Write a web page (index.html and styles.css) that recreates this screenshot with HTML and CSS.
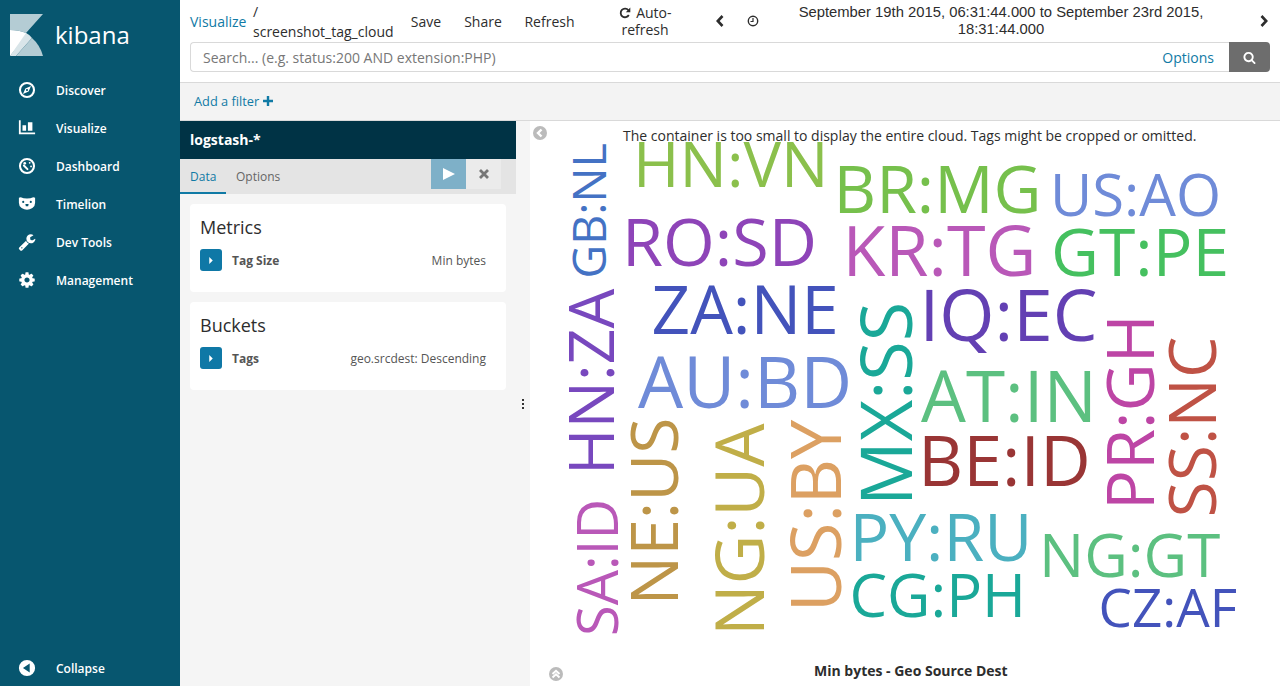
FILE: index.html
```html
<!DOCTYPE html>
<html lang="en">
<head>
  <meta charset="UTF-8">
  <title>Visualize - Kibana</title>
  <link rel="stylesheet" href="styles.css">
</head>
<body>
  <aside class="sidenav">
    <div class="brand">
      <svg class="brand-logo" viewBox="10 14 33 42" width="33" height="42">
        <path fill="#b4ccd4" d="M10 14H43L26 33Q19 30 10 30Z"/>
        <path fill="#fff" d="M10 30Q19 30 26 33L27 35L10 56Z"/>
        <path fill="#d9e5e9" d="M26 33Q29.500 34.500 32 38L16 56H10Z"/>
        <path fill="#b4ccd4" d="M32 38Q40 45 43 56H16Z"/>
      </svg>
      <span class="brand-name">kibana</span>
    </div>
    <ul class="nav-list">
      <li class="nav-item">
        <svg class="nav-icon" viewBox="0 0 20 20"><circle cx="10" cy="10" r="7.800" fill="none" stroke="#fff" stroke-width="2.300"/><path fill="#fff" d="M14.500 5.500L11.800 11.800L5.500 14.500L8.200 8.200ZM10 8.800A1.200 1.200 0 1 0 10 11.200A1.200 1.200 0 1 0 10 8.800Z" fill-rule="evenodd"/></svg>
        <span>Discover</span>
      </li>
      <li class="nav-item">
        <svg class="nav-icon" viewBox="0 0 20 20"><path fill="#fff" d="M1 1.500H3V15H19V17H1ZM5 7H9V13H5ZM11 3.500H16V13H11Z"/></svg>
        <span>Visualize</span>
      </li>
      <li class="nav-item">
        <svg class="nav-icon" viewBox="0 0 20 20"><circle cx="10" cy="10" r="7.800" fill="none" stroke="#fff" stroke-width="2.300"/><circle cx="7.500" cy="7" r="1.500" fill="#fff"/><circle cx="13" cy="6.500" r="1" fill="#fff"/><circle cx="14.500" cy="10.500" r="1" fill="#fff"/><path stroke="#fff" stroke-width="2.200" stroke-linecap="round" d="M6.500 9.500L10.500 13.500"/></svg>
        <span>Dashboard</span>
      </li>
      <li class="nav-item">
        <svg class="nav-icon" viewBox="0 0 20 20"><path fill="#fff" fill-rule="evenodd" d="M1 3L3 2.500Q6 4 10 4Q14 4 17 2.500L19 3V8.500Q19 12.500 16 14.500Q13 16.500 10 16.500Q7 16.500 4 14.500Q1 12.500 1 8.500ZM5.800 6.500A1.200 1.200 0 1 0 5.800 8.900A1.200 1.200 0 1 0 5.800 6.500ZM14.200 6.500A1.200 1.200 0 1 0 14.200 8.900A1.200 1.200 0 1 0 14.200 6.500ZM8.200 10L11.800 10L11.300 12.500H8.700Z"/></svg>
        <span>Timelion</span>
      </li>
      <li class="nav-item">
        <svg class="nav-icon" viewBox="0 0 1792 1792"><path fill="#fff" d="M448 1472q0-26-19-45t-45-19-45 19-19 45 19 45 45 19 45-19 19-45zm644-420l-682 682q-37 37-90 37-52 0-91-37l-106-108q-38-36-38-90 0-53 38-91l681-681q39 98 114.500 173.500t173.500 114.500zm634-435q0 39-23 106-47 134-164.500 217.500t-258.500 83.500q-185 0-316.500-131.500t-131.500-316.500 131.500-316.500 316.500-131.500q58 0 121.500 16.500t107.500 46.500q16 11 16 28t-16 28l-293 169v224l193 107q5-3 79-48.500t135.500-81 70.500-35.500q15 0 23.500 10t8.500 25z"/></svg>
        <span>Dev Tools</span>
      </li>
      <li class="nav-item">
        <svg class="nav-icon" viewBox="0 0 1792 1792"><path fill="#fff" d="M1152 896q0-106-75-181t-181-75-181 75-75 181 75 181 181 75 181-75 75-181zm512-109v222q0 12-8 23t-20 13l-185 28q-19 54-39 91 35 50 107 138 10 12 10 25t-9 23q-27 37-99 108t-94 71q-12 0-26-9l-138-108q-44 23-91 38-16 136-29 186-7 28-36 28h-222q-14 0-24.500-8.500t-11.500-21.500l-28-184q-49-16-90-37l-141 107q-10 9-25 9-14 0-25-11-126-114-165-168-7-10-7-23 0-12 8-23 15-21 51-66.500t54-70.500q-27-50-41-99l-183-27q-13-2-21-12.500t-8-23.500v-222q0-12 8-23t19-13l186-28q14-46 39-92-40-57-107-138-10-12-10-24 0-10 9-23 26-36 98.500-107.500t94.500-71.500q13 0 26 10l138 107q44-23 91-38 16-136 29-186 7-28 36-28h222q14 0 24.500 8.500t11.500 21.500l28 184q49 16 90 37l142-107q9-9 24-9 13 0 25 10 129 119 165 170 7 8 7 22 0 12-8 23-15 21-51 66.500t-54 70.500q26 50 41 98l183 28q13 2 21 12.500t8 23.500z"/></svg>
        <span>Management</span>
      </li>
    </ul>
    <div class="nav-item collapse-item">
      <svg class="nav-icon" viewBox="0 0 20 20"><path fill="#fff" fill-rule="evenodd" d="M10 1A9 9 0 1 0 10 19A9 9 0 1 0 10 1ZM13 5V15L5.500 10Z"/></svg>
      <span>Collapse</span>
    </div>
  </aside>

  <div class="content">
    <header class="topbar">
      <div class="menu-row">
        <a class="crumb-link">Visualize</a>
        <div class="crumb-title">/<br>screenshot_tag_cloud</div>
        <a class="menu-item save">Save</a>
        <a class="menu-item share">Share</a>
        <a class="menu-item refresh">Refresh</a>
        <a class="menu-item auto-refresh">
          <svg class="repeat-icon" viewBox="0 0 12 12" width="12" height="12"><path fill="none" stroke="#2d2d2d" stroke-width="1.800" d="M9.800 8A4.300 4.300 0 1 1 9.400 3.300"/><path fill="#2d2d2d" d="M11.300 .6V5.200H6.800Z"/></svg>
          Auto-<br>refresh
        </a>
        <svg class="chevron chevron-left" viewBox="0 0 10 14" width="10" height="14"><path fill="none" stroke="#2d2d2d" stroke-width="2.600" d="M7.500 2L2.800 7L7.500 12"/></svg>
        <svg class="clock" viewBox="0 0 12 12" width="12" height="12"><circle cx="6" cy="6" r="4.700" fill="none" stroke="#2d2d2d" stroke-width="1.400"/><path fill="none" stroke="#2d2d2d" stroke-width="1.200" d="M6 3V6.500H3.500"/></svg>
        <div class="time-range">September 19th 2015, 06:31:44.000 to September 23rd 2015, 18:31:44.000</div>
        <svg class="chevron chevron-right" viewBox="0 0 10 14" width="10" height="14"><path fill="none" stroke="#2d2d2d" stroke-width="2.600" d="M2.500 2L7.200 7L2.500 12"/></svg>
      </div>
      <form class="search-row">
        <div class="search-box">
          <span class="search-hint">Search... (e.g. status:200 AND extension:PHP)</span>
          <a class="search-options">Options</a>
        </div>
        <div class="search-btn">
          <svg viewBox="0 0 1792 1792" width="13" height="13"><path fill="#fff" d="M1216 832q0-185-131.500-316.500t-316.500-131.500-316.500 131.500-131.500 316.500 131.500 316.500 316.500 131.500 316.500-131.500 131.500-316.500zm512 832q0 52-38 90t-90 38q-54 0-90-38l-343-342q-179 124-399 124-143 0-273.500-55.500t-225-150-150-225-55.500-273.500 55.500-273.500 150-225 225-150 273.500-55.500 273.500 55.500 225 150 150 225 55.500 273.500q0 220-124 399l343 343q37 37 37 90z"/></svg>
        </div>
      </form>
    </header>

    <div class="filterbar">
      <a class="add-filter">Add a filter</a>
      <svg class="plus" viewBox="0 0 10 10" width="10" height="10"><path fill="#107aa5" d="M3.800 0H6.200V3.800H10V6.200H6.200V10H3.800V6.200H0V3.800H3.800Z"/></svg>
    </div>

    <div class="editor">
      <section class="panel">
        <div class="panel-title">logstash-*</div>
        <div class="panel-tabs">
          <a class="tab tab-active">Data</a>
          <a class="tab">Options</a>
          <div class="panel-actions">
            <div class="btn-apply"><svg viewBox="0 0 12 12" width="12" height="12"><path fill="#fff" d="M0 0L12 6L0 12Z"/></svg></div>
            <div class="btn-discard"><svg viewBox="0 0 10 10" width="10" height="10"><path stroke="#777" stroke-width="2.800" d="M1 1L9 9M9 1L1 9"/></svg></div>
          </div>
        </div>
        <div class="card">
          <div class="card-title">Metrics</div>
          <div class="agg-row">
            <div class="agg-toggle"><svg viewBox="0 0 4 8" width="4" height="7"><path fill="#fff" d="M0 0L4 4L0 8Z"/></svg></div>
            <span class="agg-name">Tag Size</span>
            <span class="agg-desc">Min bytes</span>
          </div>
        </div>
        <div class="card">
          <div class="card-title">Buckets</div>
          <div class="agg-row">
            <div class="agg-toggle"><svg viewBox="0 0 4 8" width="4" height="7"><path fill="#fff" d="M0 0L4 4L0 8Z"/></svg></div>
            <span class="agg-name">Tags</span>
            <span class="agg-desc">geo.srcdest: Descending</span>
          </div>
        </div>
      </section>

      <div class="resizer"><i></i><i></i><i></i></div>

      <section class="canvas">
        <!-- viewBox uses page coordinates so the word positions are easy to check -->
        <svg class="cloud" viewBox="530 121 750 565" width="750" height="565">
          <text class="c-lime" x="633" y="187" font-size="63">HN:VN</text>
          <text class="c-green" x="833.500" y="213" font-size="66">BR:MG</text>
          <text class="c-periwinkle" x="1050" y="216" font-size="58">US:AO</text>
          <text class="c-purple" x="622" y="266" font-size="66.500">RO:SD</text>
          <text class="c-orchid" x="842.500" y="276" font-size="70">KR:TG</text>
          <text class="c-emerald" x="1051" y="276" font-size="66">GT:PE</text>
          <text class="c-indigo" x="651.500" y="334" font-size="67.500">ZA:NE</text>
          <text class="c-violet" x="919.500" y="341" font-size="71">IQ:EC</text>
          <text class="c-periwinkle" x="638" y="408" font-size="71.500">AU:BD</text>
          <text class="c-mint" x="921" y="422" font-size="71">AT:IN</text>
          <text class="c-brick" x="918" y="486" font-size="70">BE:ID</text>
          <text class="c-sky" x="849.500" y="561" font-size="66">PY:RU</text>
          <text class="c-mint" x="1039" y="577" font-size="60">NG:GT</text>
          <text class="c-teal" x="849.500" y="617" font-size="59.700">CG:PH</text>
          <text class="c-indigo" x="1098.500" y="627" font-size="53">CZ:AF</text>
          <text class="c-blue" transform="translate(606 278.500) rotate(-90)" font-size="46.500">GB:NL</text>
          <text class="c-grape" transform="translate(614 475) rotate(-90)" font-size="63">HN:ZA</text>
          <text class="c-orchid" transform="translate(618 636) rotate(-90)" font-size="56">SA:ID</text>
          <text class="c-ochre" transform="translate(678 605.500) rotate(-90)" font-size="66">NE:US</text>
          <text class="c-olive" transform="translate(764 636) rotate(-90)" font-size="68.500">NG:UA</text>
          <text class="c-tan" transform="translate(841 612) rotate(-90)" font-size="70">US:BY</text>
          <text class="c-teal" transform="translate(912 506) rotate(-90)" font-size="72">MX:SS</text>
          <text class="c-magenta" transform="translate(1154 510) rotate(-90)" font-size="66.500">PR:GH</text>
          <text class="c-rust" transform="translate(1216 517.500) rotate(-90)" font-size="66">SS:NC</text>
        </svg>
        <svg class="spy-toggle spy-left" viewBox="0 0 14 14" width="14" height="14"><circle cx="7" cy="7" r="7" fill="#bbb"/><path fill="none" stroke="#fff" stroke-width="2.400" d="M8.500 3.500L5 7L8.500 10.500"/></svg>
        <p class="cloud-warning">The container is too small to display the entire cloud. Tags might be cropped or omitted.</p>
        <p class="cloud-label">Min bytes - Geo Source Dest</p>
        <svg class="spy-toggle spy-bottom" viewBox="0 0 14 14" width="14" height="14"><circle cx="7" cy="7" r="7" fill="#bbb"/><path fill="none" stroke="#fff" stroke-width="2" d="M3.500 7L7 3.800L10.500 7M3.500 10.500L7 7.300L10.500 10.500"/></svg>
      </section>
    </div>
  </div>
</body>
</html>
```

FILE: styles.css
```css
* {
  box-sizing: border-box;
}
html, body {
  height: 100%;
}
body {
  margin: 0;
  display: flex;
  overflow: hidden;
  font-family: "Open Sans", sans-serif;
  font-size: 14px;
  color: #2d2d2d;
  background: #fff;
}
a {
  color: inherit;
}
ul {
  list-style: none;
  margin: 0;
  padding: 0;
}

/* left nav */
.sidenav {
  flex: 0 0 180px;
  display: flex;
  flex-direction: column;
  background: #07566f;
  color: #fff;
}
.brand {
  display: flex;
  align-items: center;
  height: 71px;
  padding: 0 0 1px 10px;
}
.brand-name {
  margin-left: 12px;
  font-size: 24px;
  line-height: 42px;
}
.nav-item {
  display: flex;
  align-items: center;
  height: 38px;
  padding-left: 18px;
  font-size: 12px;
  font-weight: 600;
}
.nav-icon {
  width: 18px;
  height: 18px;
  margin-right: 20px;
}
.collapse-item {
  margin-top: auto;
  margin-bottom: -1px;
}

/* top bar */
.content {
  flex: 1;
  min-width: 0;
  display: flex;
  flex-direction: column;
}
.topbar {
  height: 83px;
  padding: 0 10px;
  border-bottom: 1px solid #d9d9d9;
}
.menu-row {
  display: flex;
  align-items: center;
  height: 42px;
}
.crumb-link {
  width: 63px;
  color: #107aa5;
}
.crumb-title {
  width: 157px;
  line-height: 20px;
  margin-top: 1px;
}
.menu-item {
  text-align: center;
}
.save {
  width: 32px;
}
.share {
  width: 38px;
  margin-left: 22px;
}
.refresh {
  width: 51px;
  margin-left: 22px;
}
.auto-refresh {
  width: 60px;
  margin-left: 40px;
  line-height: 17px;
}
.repeat-icon {
  vertical-align: -1px;
  margin-right: 2px;
}
.chevron-left {
  margin-left: 40px;
}
.clock {
  margin-left: 22px;
}
.time-range {
  width: 420px;
  margin-left: 32px;
  font-family: "Liberation Sans", sans-serif;
  font-size: 14.800px;
  line-height: 17px;
  text-align: center;
}
.chevron-right {
  margin-left: 48px;
}
.search-row {
  display: flex;
  height: 30px;
  margin: 0;
}
.search-box {
  flex: 1;
  display: flex;
  align-items: center;
  justify-content: space-between;
  padding: 0 15px 0 12px;
  border: 1px solid #d9d9d9;
  border-right: 0;
  border-radius: 4px 0 0 4px;
}
.search-hint {
  color: #777;
}
.search-options {
  color: #107aa5;
}
.search-btn {
  flex: 0 0 41px;
  display: flex;
  align-items: center;
  justify-content: center;
  background: #6d6d6d;
  border-radius: 0 4px 4px 0;
}

/* filters */
.filterbar {
  display: flex;
  align-items: center;
  gap: 4px;
  height: 38px;
  padding: 0 0 2px 14px;
  background: #f3f3f3;
  border-bottom: 1px solid #d9d9d9;
}
.add-filter {
  font-size: 12.800px;
  color: #107aa5;
}

/* editor */
.editor {
  flex: 1;
  min-height: 0;
  display: flex;
}
.panel {
  flex: 0 0 336px;
  background: #f5f5f5;
}
.panel-title {
  height: 38px;
  padding-left: 10px;
  background: #003345;
  color: #fff;
  font-weight: 700;
  line-height: 38px;
}
.panel-tabs {
  display: flex;
  height: 35px;
  margin-bottom: 10px;
  background: #e4e4e4;
}
.tab {
  padding: 0 10px;
  font-size: 12px;
  line-height: 35px;
  color: #666;
}
.tab-active {
  width: 46px;
  color: #107aa5;
  border-bottom: 2px solid #107aa5;
}
.panel-actions {
  display: flex;
  margin-left: auto;
  margin-right: 15px;
}
.btn-apply, .btn-discard {
  display: flex;
  align-items: center;
  justify-content: center;
  width: 35px;
  height: 30px;
}
.btn-apply {
  background: #7eb0c8;
}
.btn-discard {
  background: #ebebeb;
}
.card {
  height: 88px;
  margin: 0 10px 10px;
  padding: 11px 10px 10px;
  background: #fff;
  border-radius: 4px;
}
.card-title {
  font-size: 18px;
  line-height: 24px;
}
.agg-row {
  display: flex;
  align-items: center;
  margin-top: 10px;
  padding-right: 10px;
  font-size: 12px;
  color: #555;
}
.agg-toggle {
  display: flex;
  align-items: center;
  justify-content: center;
  width: 22px;
  height: 22px;
  margin-right: 10px;
  background: #0f78a6;
  border-radius: 3px;
}
.agg-name {
  font-weight: 700;
}
.agg-desc {
  margin-left: auto;
}
.resizer {
  flex: 0 0 14px;
  display: flex;
  flex-direction: column;
  align-items: center;
  gap: 2px;
  padding-top: 278px;
  background: #f5f5f5;
}
.resizer i {
  width: 2px;
  height: 2px;
  background: #333;
}

/* tag cloud, free canvas */
.canvas {
  position: relative;
  flex: 1;
  overflow: hidden;
}
.cloud {
  position: absolute;
  left: 0;
  top: 0;
}
.cloud text {
  font-family: "Open Sans", sans-serif;
}
.cloud-warning, .cloud-label {
  position: absolute;
  margin: 0;
  white-space: nowrap;
  color: #2d2d2d;
}
.cloud-warning {
  left: 93px;
  top: 5px;
}
.cloud-label {
  left: 284px;
  top: 540px;
  font-weight: 700;
}
.spy-toggle {
  position: absolute;
}
.spy-left {
  left: 3px;
  top: 5px;
}
.spy-bottom {
  left: 19px;
  top: 546px;
}
.c-lime { fill: #8bc04c; }
.c-green { fill: #76c04c; }
.c-periwinkle { fill: #6f8bd8; }
.c-purple { fill: #8e44b8; }
.c-orchid { fill: #b958b8; }
.c-emerald { fill: #45c05f; }
.c-indigo { fill: #4353bb; }
.c-violet { fill: #6340b3; }
.c-mint { fill: #5cc080; }
.c-brick { fill: #993535; }
.c-sky { fill: #4bb0c0; }
.c-teal { fill: #1aa898; }
.c-blue { fill: #4472c4; }
.c-grape { fill: #7848be; }
.c-ochre { fill: #bd9548; }
.c-olive { fill: #c0ae48; }
.c-tan { fill: #dca062; }
.c-magenta { fill: #bd45a5; }
.c-rust { fill: #bf5245; }
```
